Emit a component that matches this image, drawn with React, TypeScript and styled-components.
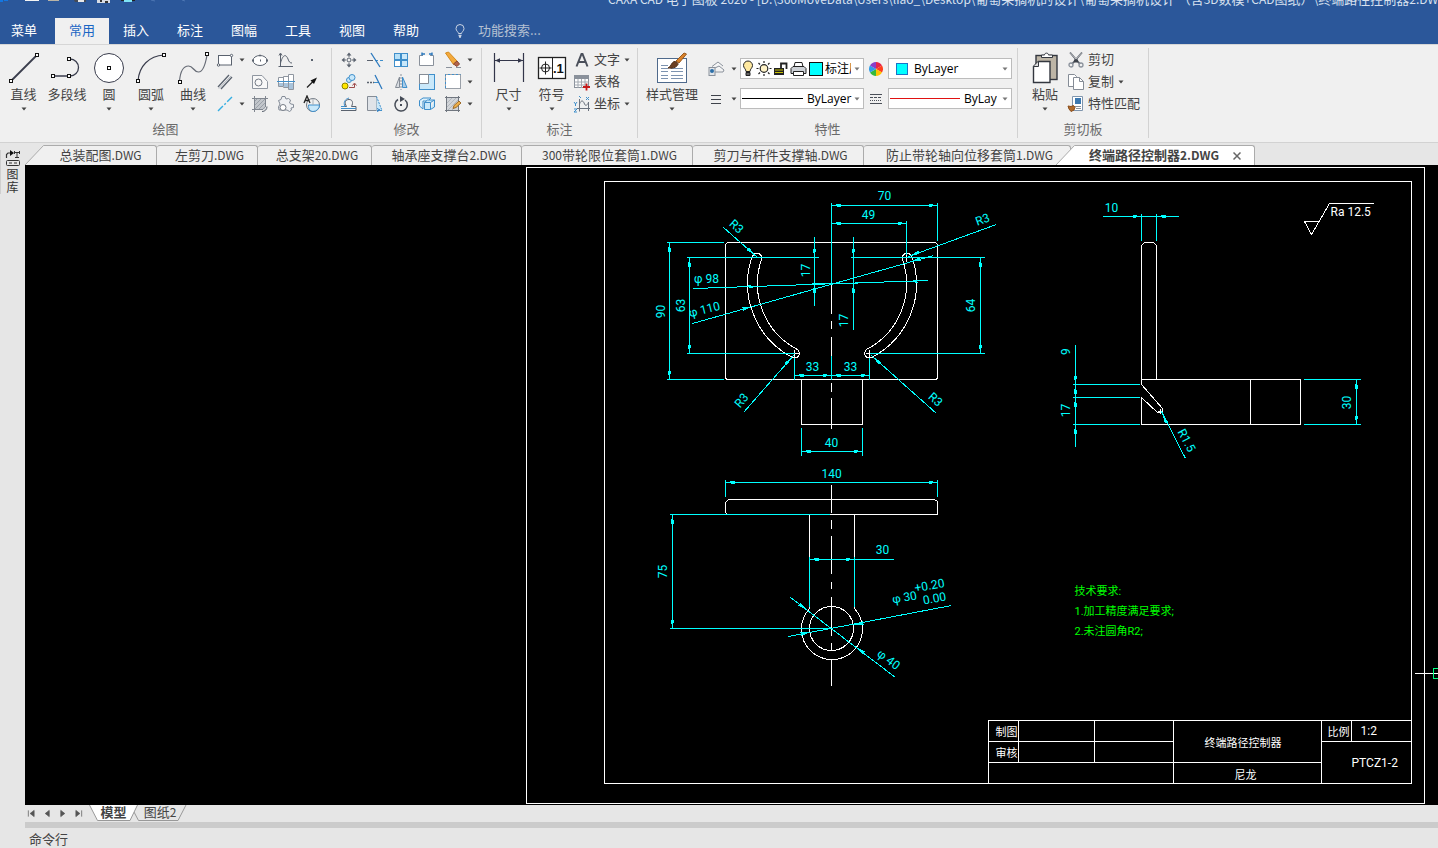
import React from 'react';
import styled, { createGlobalStyle } from 'styled-components';

const UI_FONT = '"Noto Sans CJK SC", "Noto Sans", sans-serif';
const CAD_FONT = 'Roboto, "Noto Sans CJK SC", sans-serif';
const CYAN = '#00ffff';
const WHITE = '#ffffff';
const GREEN = '#00ff00';

const GlobalStyle = createGlobalStyle`
  * { box-sizing: border-box; }
  body { margin: 0; background: #e6e6e6; font-family: ${UI_FONT}; font-size: 13px; color: #444; }
  button, input, select { font: inherit; color: inherit; border: 0; padding: 0; margin: 0; background: none; }
  svg { display: block; flex: none; }
`;

/* ---------- window frame ---------- */

const Window = styled.div`
  display: flex;
  flex-direction: column;
  min-height: 100vh;
  overflow: hidden;
`;

const Header = styled.header`
  background: #2b579a;
  color: #fff;
`;

const TitleBar = styled.div`
  display: flex;
  height: 18px;
  overflow: hidden;
`;

const QuickAccess = styled.div`
  flex: none;
  width: 608px;
`;

const WindowTitle = styled.h1`
  margin: -11px 0 0;
  font-size: 13px;
  font-weight: 400;
  line-height: 20px;
  white-space: nowrap;
  color: #d8e1ef;
`;

const LatinRun = styled.span`
  font-size: 12px;
`;

const MenuBar = styled.nav`
  display: flex;
  align-items: stretch;
  height: 26px;
`;

const MenuTab = styled.button<{ $active?: boolean; $first?: boolean }>`
  width: ${p => (p.$first ? 48 : 54)}px;
  margin-right: ${p => (p.$first ? 7 : 0)}px;
  padding-bottom: 3px;
  line-height: 20px;
  color: ${p => (p.$active ? '#1a66c4' : '#fff')};
  background: ${p => (p.$active ? '#f0f0f0' : 'transparent')};
`;

const Search = styled.label`
  display: flex;
  align-items: center;
  gap: 12px;
  padding-left: 21px;
`;

const SearchInput = styled.input`
  width: 120px;
  padding-bottom: 3px;
  outline: none;
  line-height: 20px;
  &::placeholder { color: #b4c0d2; opacity: 1; }
`;

/* ---------- ribbon ---------- */

const Ribbon = styled.div`
  display: flex;
  height: 99px;
  padding: 3px 0 4px;
  background: #f0f0f0;
  border-top: 1px solid #d6d6d6;
  border-bottom: 1px solid #d2d2d2;
`;

const Group = styled.section<{ $w: number }>`
  flex: none;
  display: flex;
  flex-direction: column;
  width: ${p => p.$w}px;
  border-right: 1px solid #d2d2d2;
`;

const GroupBody = styled.div<{ $pad?: number }>`
  display: flex;
  height: 72px;
  padding-left: ${p => p.$pad ?? 0}px;
`;

const GroupLabel = styled.div`
  text-align: center;
  line-height: 18px;
  color: #6a6a6a;
`;

const BigButton = styled.button<{ $w: number }>`
  flex: none;
  display: flex;
  flex-direction: column;
  align-items: center;
  width: ${p => p.$w}px;
  padding-top: 4px;
  white-space: nowrap;
  line-height: 20px;
  & > span { margin-bottom: 3px; }
`;

const ToolGrid = styled.div<{ $cols: string; $pad?: number }>`
  display: grid;
  grid-template-columns: ${p => p.$cols};
  grid-auto-rows: 22px;
  padding: 1px 0 0 ${p => p.$pad ?? 0}px;
`;

const Tool = styled.button<{ $start?: boolean }>`
  display: flex;
  align-items: center;
  justify-content: ${p => (p.$start ? 'flex-start' : 'center')};
  gap: 4px;
`;

const ToolList = styled.div`
  display: flex;
  flex-direction: column;
  padding-top: 1px;
`;

const ListTool = styled.button`
  display: flex;
  align-items: center;
  height: 22px;
  white-space: nowrap;
  line-height: 18px;
  gap: 3px;
  & > span { padding-bottom: 3px; }
`;

const PropColumn = styled.div`
  display: flex;
  flex-direction: column;
  gap: 9px;
  padding-top: 10px;
`;

const PropRow = styled.div`
  display: flex;
  align-items: center;
  height: 21px;
`;

const PropButton = styled.button<{ $w: number; $menu?: boolean }>`
  display: flex;
  align-items: center;
  justify-content: ${p => (p.$menu ? 'flex-end' : 'center')};
  gap: 5px;
  width: ${p => p.$w}px;
  padding-right: ${p => (p.$menu ? 2 : 0)}px;
`;

const Combo = styled.div<{ $gap: number; $w: number }>`
  display: flex;
  align-items: center;
  gap: ${p => p.$gap}px;
  width: ${p => p.$w}px;
  height: 21px;
  padding: 0 2px 0 1px;
  background: #fff;
  border: 1px solid #bcbcbc;
`;

const ComboSelect = styled.select<{ $wide?: boolean }>`
  flex: 1;
  min-width: 0;
  height: 19px;
  margin-right: ${p => (p.$wide ? -4 : 0)}px;
  appearance: none;
  outline: none;
  overflow: hidden;
  text-overflow: clip;
  color: #000;
  font-family: "Open Sans", ${UI_FONT};
  font-size: 12px;
`;

const LineSample = styled.span<{ $c: string; $w: number }>`
  flex: none;
  width: ${p => p.$w}px;
  height: 1px;
  background: ${p => p.$c};
`;

const Swatch = styled.span<{ $edge: string; $size: number }>`
  flex: none;
  width: ${p => p.$size}px;
  height: ${p => p.$size}px;
  background: ${CYAN};
  border: 1px solid ${p => p.$edge};
`;

/* ---------- work area ---------- */

const Work = styled.div`
  flex: 1;
  display: flex;
`;

const SidePanel = styled.aside`
  flex: none;
  display: flex;
  flex-direction: column;
  width: 25px;
  padding-top: 7px;
`;

const LibraryTab = styled.button`
  display: flex;
  flex-direction: column;
  align-items: center;
  width: 24px;
  height: 44px;
  border-left: 1px solid #cfcfcf;
  font-size: 12px;
  line-height: 13px;
  color: #333;
`;

const Main = styled.main`
  flex: 1;
  min-width: 0;
  display: flex;
  flex-direction: column;
`;

const DocTabs = styled.div`
  display: flex;
  align-items: flex-end;
  height: 22px;
  overflow: hidden;
`;

const DocTab = styled.div<{ $w: number; $active?: boolean }>`
  flex: none;
  display: flex;
  width: ${p => p.$w}px;
  height: 20px;
  margin-left: ${p => (p.$active ? -15 : 0)}px;
  z-index: ${p => (p.$active ? 1 : 0)};
  font-weight: ${p => (p.$active ? 700 : 400)};
`;

const DocFace = styled.div<{ $active?: boolean; $slanted?: boolean }>`
  flex: 1;
  display: flex;
  align-items: center;
  justify-content: center;
  gap: 14px;
  padding-left: ${p => (p.$slanted ? 0 : 5)}px;
  background: ${p => (p.$active ? '#fff' : '#f0f0f0')};
  border-top: 1px solid #ababab;
  border-right: 1px solid #ababab;
  border-radius: ${p => (p.$slanted ? '0 3px 0 0' : '3px 3px 0 0')};
`;

const DocButton = styled.button`
  padding-bottom: 2px;
  line-height: 17px;
  white-space: nowrap;
`;

const CloseButton = styled.button`
  display: flex;
`;

const Canvas = styled.div`
  flex: 1;
  min-height: 640px;
  background: #000;
  overflow: hidden;
`;

const Drawing = styled.svg`
  width: 100%;
  height: 640px;
  font-family: ${CAD_FONT};
`;

const SheetBar = styled.div`
  display: flex;
  height: 17px;
  padding-left: 2px;
`;

const SheetNav = styled.div`
  display: flex;
  align-items: center;
  gap: 8px;
  width: 62px;
  height: 17px;
`;

const NavButton = styled.button`
  display: flex;
`;

const SheetTab = styled.button<{ $active?: boolean; $w: number }>`
  position: relative;
  width: ${p => p.$w}px;
  height: 17px;
  padding-bottom: 4px;
  margin-left: ${p => (p.$active ? 0 : -5)}px;
  z-index: ${p => (p.$active ? 1 : 0)};
  font-weight: ${p => (p.$active ? 700 : 400)};
  line-height: 13px;
  & > svg { position: absolute; top: 0; left: 0; z-index: -1; }
`;

const Splitter = styled.div`
  height: 6px;
  background: #cbcbcb;
`;

const CommandLine = styled.div`
  height: 20px;
  padding-left: 4px;
  line-height: 21px;
`;

/* ---------- small drawings for the ribbon ---------- */

type Kids = { children?: React.ReactNode };
const G = '#5a626e';
const B = '#3f8fcb';
const L = '#c9e8fa';

const Caret = ({ c = '#444' }: { c?: string }) => (
  <svg width="8" height="4" viewBox="0 0 8 4"><path d="M1.500.5h5L4 3.500z" fill={c} /></svg>
);
const S = ({ children }: Kids) => (
  <svg width="18" height="18" viewBox="0 0 18 18" fill="none" stroke={G}>{children}</svg>
);
const Big = ({ children }: Kids) => (
  <svg width="32" height="32" viewBox="0 0 32 32" fill="none" stroke="#3a3d4d">{children}</svg>
);
const Node = ({ x, y }: { x: number; y: number }) => (
  <rect x={x - 1.5} y={y - 1.5} width="3" height="3" fill="#fff" stroke="#111" strokeWidth="1" />
);

const LineIcon = () => <Big><path d="M3 29 29 3" strokeWidth="1.8" /><Node x={3} y={29} /><Node x={29} y={3} /></Big>;
const PolylineIcon = () => (
  <Big><path d="M2 24h17a8.500 8.500 0 0 0 0-17" strokeWidth="1.3" /><Node x={2} y={24} /><Node x={18} y={24} /><Node x={18} y={7} /></Big>
);
const CircleIcon = () => <Big><circle cx="16" cy="16" r="14.5" fill="#fff" /><Node x={16} y={16} /></Big>;
const ArcIcon = () => <Big><path d="M3 29C4 14 14 4 29 3" strokeWidth="1.2" /><Node x={3} y={29} /><Node x={29} y={3} /></Big>;
const CurveIcon = () => (
  <Big><path d="M2.500 29c1-11 4-15 9-15s5 6 10 6 7-8 8.500-17" stroke="#666b75" strokeWidth="1.2" /><Node x={3} y={30} /><Node x={30} y={2} /></Big>
);

const RectIcon = () => <S><rect x="2.500" y="4.500" width="13" height="9.500" fill="#fff" /><circle cx="15.500" cy="4.500" r="1.200" fill="#fff" /><circle cx="2.500" cy="14" r="1.200" fill="#fff" /></S>;
const EllipseIcon = () => <S><ellipse cx="9" cy="9.500" rx="7" ry="5" fill="#fff" /><path d="M1 9.500h2M15 9.500h2M9 9.500h1M8.500 4.500h1" strokeWidth="2" /></S>;
const WaveIcon = () => <S><path d="M3.500 3v12.500M1.500 15.500H16" /><path d="M3.500 12C6 3 9 3 11 8c1 3 2 4 4 4" /><path d="M2 4.500 3.500 2 5 4.500" /></S>;
const DotIcon = () => <S><rect x="8" y="8" width="2" height="2" fill={G} stroke="none" /></S>;
const ParallelIcon = () => <S><path d="M2 14 13 2M5 16 16 4" strokeWidth="1.300" /><path d="M3 15.500 15 3" stroke="#aeb4bc" /></S>;
const HoleIcon = () => <S><path d="M1.500 2.500H11l5.500 6v7h-15z" stroke="#8f96a0" fill="#f8f8f8" /><circle cx="7.500" cy="9.500" r="3.500" stroke="#737a85" /></S>;
const ShaftIcon = () => (
  <S><path d="M1.500 4.500h5v-1h5v-2h5v15h-5v-2h-5v-1h-5z" fill="#fff" stroke="#8f96a0" /><path d="M2 10h14v6h-4v-2H7v-1H2z" fill="#a9c4dc" stroke="none" /><path d="M6.500 4v9M11.500 3v12" stroke="#8f96a0" /><path d="M0 8.500h18" stroke={B} /></S>
);
const ArrowIcon = () => <S><path d="M4 14.500 10 8.500" stroke="#222" strokeWidth="1.200" /><path d="M14 4.500 7.500 7.500l3.500 3.500z" fill="#111" stroke="none" /></S>;
const CenterLineIcon = () => <S><path d="M2 16 16 2" stroke="#35aee2" strokeWidth="1.400" strokeDasharray="7 2 2 2" /></S>;
const HatchIcon = () => (
  <S><rect x="3.500" y="3.500" width="11" height="11" fill="#c2c6cb" stroke="none" /><path d="M3 7l4-4M3 11l8-8M3 15 15 3M7 15l8-8M11 15l4-4" stroke="#9aa0a8" /><path d="M1 3.500h16M1 14.500h11M3.500 1v16M14.500 1v11" stroke="#80868f" /><path d="M11 16.500c3 0 5-2 5-5" /></S>
);
const GearIcon = () => (
  <S><path d="M1.500 5.500 4 4.500 5 1.500h3l1 2.500 2.500-.5L13.500 5 12.500 8l1.500 1 2.500.5v3l-2.500.5.5 2-2 1.500-2.500-1.500H2l-.5-3L3 9z" fill="#eef0f3" stroke="#838b97" /><circle cx="6" cy="12.500" r="3" fill="#fff" stroke="#737a85" /></S>
);
const BlockIcon = () => (
  <S><circle cx="10" cy="10" r="6.500" stroke="#6f7781" /><path d="M5.500 10H16.500A6.500 6.500 0 0 1 10 16.500C7.500 16.500 5 14 5.500 10z" fill={L} stroke={B} /><path d="M1 8 4 1 7 8M2 5.500h4" stroke="#222" strokeWidth="1.300" /><path d="M10 3.500v6.500" stroke="#a9b0b8" /></S>
);

const MoveIcon = () => <S><circle cx="9" cy="9" r="2" /><path d="M9 4v2M9 12v2M4 9h2M12 9h2" /><path d="M9 1.500 6.500 4.500h5zM9 16.500l-2.500-3h5zM1.500 9l3-2.500v5zM16.500 9l-3-2.500v5z" fill={G} stroke="none" /></S>;
const TrimIcon = () => <S><path d="M1 9.500h6" /><path d="M9 9.500h8" stroke={B} strokeDasharray="3 2" /><path d="M5 2l9 14" stroke="#2b78bd" strokeWidth="1.300" /></S>;
const ArrayIcon = () => <S><g stroke={B}><rect x="2.500" y="2.500" width="6" height="6" fill="#b7e0f7" /><rect x="9.500" y="2.500" width="6" height="6" fill={L} /><rect x="2.500" y="9.500" width="6" height="6" fill="#fff" /><rect x="9.500" y="9.500" width="6" height="6" fill={L} /></g></S>;
const StretchIcon = () => <S><path d="M5 4.500H1.500v10h14v-10H12" fill="#fff" stroke="#8a919b" /><path d="M4 1.500v3M4 3h3M14 1.500v3M14 3h-3" stroke="#2b78bd" strokeWidth="1.400" /></S>;
const EraseIcon = () => <S><path d="M1.500 2 4.500 1 13 10l-3.500 3.500z" fill="#f3a93c" stroke="#d58b1c" /><path d="M13 10l2.500 3-2.500 2.500L9.500 13z" fill="#b4644a" stroke="#8a4832" /><path d="M2 16.500h6M12 16.500h5" stroke="#8a919b" /></S>;
const CopyMoveIcon = () => <S><circle cx="5" cy="13" r="3" fill="#ffe600" stroke="#8a8400" /><circle cx="9" cy="7" r="2.500" fill={L} stroke={B} /><circle cx="12" cy="4.500" r="3" fill={L} stroke={B} /><path d="M9 14.500h5.500V11M12.500 12.500l2-2.500 2 2.500" stroke="#9d4b4b" /></S>;
const ExtendIcon = () => <S><path d="M1 9.500h7" strokeWidth="1.300" strokeDasharray="2 1" /><path d="M8 9.500h5" stroke={B} /><path d="M9 2l7 14" stroke="#2b78bd" strokeWidth="1.300" /></S>;
const MirrorIcon = () => <S><path d="M7.500 4v10.500h-4z" fill="#d9dde2" stroke="#858c96" /><path d="M10.500 4v10.500h4.500z" fill="#a9cbe6" stroke={B} /><path d="M9 1v16" stroke="#8a919b" strokeDasharray="2 1" /></S>;
const ScaleIcon = () => <S><rect x="1.500" y="1.500" width="15" height="15" fill={L} stroke={B} /><path d="M1.500 1.500h9v9h-9z" fill="#fff" stroke="#858c96" /></S>;
const BreakIcon = () => <S><rect x="1.500" y="1.500" width="15" height="14" fill="#fff" stroke="#9aa0a8" /><path d="M1.500 15v-13.500h15" stroke={B} strokeDasharray="2 2" /></S>;
const OffsetIcon = () => <S><path d="M1 15.500h15v-4h-4.500c2-4 1-7-2.500-7s-5 3-2.500 7H1" stroke={G} fill="#f4f4f4" /><path d="M1 11.500h4c-2-4 0-7.500 4-8.500M1 13.500h15" stroke={B} /></S>;
const ChamferIcon = () => <S><path d="M1.500 1.500h9v14h-9z" fill="#dfe3e8" stroke="#858c96" /><path d="M10.500 1.500l5.500 14h-5.500" fill={L} stroke={B} strokeDasharray="2 1" /><path d="M11 13.500l3 1.500-3 1.500" stroke="#2b78bd" /></S>;
const RotateIcon = () => <S><path d="M6 4.500a6.200 6.200 0 1 0 7 .5" strokeWidth="1.500" stroke="#454b56" /><path d="M8 1l5 3-5 3z" fill="#454b56" stroke="none" /><rect x="8" y="9" width="2" height="2" fill="#454b56" stroke="none" /></S>;
const CubeIcon = () => <S><g stroke={B}><path d="M1.500 5.500 5 3h8l-3 3H5v8l-3.500-3z" fill="#dff1fb" /><path d="M6.500 7.500h6v7h-6zM6.500 7.500 9.500 5h7l-4 2.500M16.500 5v7l-4 2.500" fill={L} /></g></S>;
const EditHatchIcon = () => <S><rect x="3" y="3" width="11" height="12" fill="#d2d5d9" stroke="none" /><path d="M3 8l5-5M3 12l9-9M4 15 14 5M8 15l6-6" stroke="#b2b7bd" /><path d="M1 2.500h15M1 15.500h15M2.500 1v16M14.500 1v16" stroke="#70767f" /><path d="M9 13.500l1-3 5-4.500 2 2-5 4.500z" fill="#eeb04a" stroke="#9d6a28" /></S>;

const DimensionIcon = () => <Big><path d="M1.500 1v29M30.500 1v29M2 8.500h28" strokeWidth="1.200" stroke="#33364a" /><path d="M2 8.500l5-2.200v4.400zM30 8.500l-5-2.200v4.400z" fill="#33364a" stroke="none" /></Big>;
const SymbolText = styled.text`
  font: 700 13px "Liberation Sans", sans-serif;
`;
const SymbolIcon = () => (
  <Big><rect x="2.500" y="5.500" width="27" height="21" fill="#fff" stroke="#222" strokeWidth="1.300" /><path d="M16.500 5.500v21" stroke="#222" /><circle cx="9.500" cy="16" r="4" stroke="#222" /><path d="M9.500 9.500v13M3.500 16h12" stroke="#222" /><SymbolText x="17" y="21" fill="#111" stroke="none">.1</SymbolText></Big>
);
const TextIcon = () => <S><path d="M3.500 15.500 8.500 3h1L14.500 15.500M5.200 11h7.600" stroke="#4a4f5a" strokeWidth="2" /></S>;
const TableIcon = () => <S><rect x="1.500" y="2.500" width="14" height="12" fill="#fff" stroke="#8a919b" /><path d="M1 2h15v4H1z" fill="#8a919b" stroke="none" /><path d="M1.500 9h14M1.500 12h14M5 6v9M8.500 6v9M12 6v9" stroke="#a3a9b1" /><path d="M13.500 10.500v7M10 14h7" stroke="#c61a1a" strokeWidth="1.800" /></S>;
const CoordIcon = () => <S><path d="M6.500 4v12.500M4 13.500h13M6.500 9c2-5 4-3 5 0s4 0 4-2M15.500 7v9" stroke="#6b727d" /><path d="M1 7l1.500 2L4 7M2.500 9v2M13 2l3 3M16 2l-3 3M1 14h3l-3 3h3M6 1l2 2" stroke={B} /></S>;

const StyleIcon = () => (
  <Big><rect x="1.500" y="6.500" width="29" height="24" fill="#fff" stroke="#4f6a8c" /><path d="M5 13.500h7M5 16.500h7M5 19.500h7M5 23.500h7M5 26.500h7M15 16.500h12M15 19.500h12M15 23.500h12M15 26.500h12" stroke="#7d93b0" /><path d="M20 9 28 1l2.500 1L23 11z" fill="#d9822b" stroke="#9b5a1c" /><path d="M12 16c3-1 3-5 6-6.500 3 0 4 1.500 4 3-2 3.500-6 4-10 3.500z" fill="#6b3f22" stroke="#50301a" /></Big>
);
const LayerIcon = () => <S><path d="M5 6.500 11 2l5 4M6 9l6-3 5 4M8 12h8l1-2" stroke="#8a919b" fill="#f6f6f6" /><rect x="2" y="7.500" width="6" height="8" fill="#e2e6ea" stroke="#8a919b" /><circle cx="5" cy="11" r="2" fill="#2c6fa8" stroke="none" /></S>;
const WeightIcon = () => <S><path d="M4 5.500h10M4 9.500h10M4 13.500h10" stroke="#3f434b" strokeWidth="1.200" /></S>;
const BulbIcon = () => <svg width="12" height="17" viewBox="0 0 12 17"><path d="M6 1a4.500 4.500 0 0 0-4.500 4.500C1.500 8 4 9 4 11.500h4C8 9 10.500 8 10.500 5.500A4.500 4.500 0 0 0 6 1z" fill="#ffe9a0" stroke="#222" /><path d="M4 12.500h4v3H4z" fill="#666" stroke="#222" /></svg>;
const SunIcon = () => <svg width="16" height="17" viewBox="0 0 16 17" stroke="#222" strokeWidth="1.200"><circle cx="8" cy="8.500" r="3.800" fill="#fff3c8" /><path d="M8 1v2M8 14v2M.5 8.500h2M13.500 8.500h2M2.500 3l1.500 1.500M12 12.500l1.500 1.500M13.500 3 12 4.500M4 12.500 2.500 14" /></svg>;
const LockIcon = () => <svg width="14" height="16" viewBox="0 0 14 16"><path d="M7 8V2.500h5.500V8" fill="none" stroke="#222" strokeWidth="1.800" /><path d="M0 7h10v7H0z" fill="#222" /><path d="M1 9h8M1 11.500h8" stroke="#c7c000" /></svg>;
const PrinterIcon = () => <svg width="17" height="16" viewBox="0 0 17 16" stroke="#222" fill="#eceef0"><path d="M4 6 5 1.500h7L13 6" fill="#fff" /><path d="M1 7.500 3 5.500h11l2 2v5H1z" fill="#cdd1d6" /><path d="M3.500 10.500h10v4h-10z" fill="#fff" /></svg>;
const WheelIcon = () => (
  <svg width="14" height="14" viewBox="0 0 14 14">
    <path d="M7 7V0a7 7 0 0 1 6 3.500z" fill="#e8254a" /><path d="M7 7l6-3.500a7 7 0 0 1 0 7z" fill="#ff3f1c" />
    <path d="M7 7l6 3.500A7 7 0 0 1 7 14z" fill="#ffc400" /><path d="M7 7v7a7 7 0 0 1-6-3.500z" fill="#35b93a" />
    <path d="M7 7 1 10.500a7 7 0 0 1 0-7z" fill="#2f9ce8" /><path d="M7 7 1 3.500A7 7 0 0 1 7 0z" fill="#8a3fc8" />
  </svg>
);
const LinetypeIcon = () => <svg width="14" height="12" viewBox="0 0 14 12" stroke="#4a4f58"><path d="M1 1.500h12M1 10.500h12" /><path d="M1 4.500h12" strokeDasharray="3 1" /><path d="M1 7.500h12" strokeDasharray="1 1" /></svg>;

const PasteIcon = () => (
  <Big><rect x="7" y="3.500" width="21" height="24" fill="#bdb5a6" stroke="#33373f" strokeWidth="1.400" /><path d="M12.500 5.500v-2.500h3c0-2.500 4-2.500 4 0h4v2.500z" fill="#fff" stroke="#33373f" /><path d="M4.500 14.500l5-5H21v21H4.500z" fill="#fff" stroke="#33373f" strokeWidth="1.400" /><path d="M4.500 14.500h5v-5" fill="#ddd" stroke="#33373f" /></Big>
);
const CutIcon = () => <S><path d="M3 1.500 13 13M15 1.500 5 13" stroke="#5c626b" strokeWidth="1.800" /><path d="M3 1.500 9 8M15 1.500 9 8" stroke="#f0f0f0" strokeWidth=".6" /><path d="M7 8.500h4v3H7z" fill="#3e434b" stroke="none" /><circle cx="4" cy="14" r="2" stroke="#8a919b" strokeWidth="1.300" /><circle cx="14" cy="14" r="2" stroke="#8a919b" strokeWidth="1.300" /></S>;
const CopyIcon = () => <S><path d="M1.500 1.500h6l2 2v10h-8z" fill="#fff" stroke="#858c96" /><path d="M6.500 4.500h6l4 4v8h-10z" fill="#fff" stroke="#858c96" /><path d="M12.500 4.500v4h4" stroke="#858c96" /></S>;
const MatchIcon = () => <S><path d="M5.500 1.500h10v14h-10z" fill="#fff" stroke="#7f95ad" /><path d="M8 3h6v6H8z" fill="#3c78b0" stroke="none" /><path d="M7 11.500h7M9 13.500h5" stroke="#8a919b" /><path d="M1 11l3 .5 2.500-1 1.500 2-1 2.500-3 1.500L2 14z" fill="#b06a2c" stroke="#8a4d1a" /></S>;
const IdeaIcon = () => <svg width="12" height="14" viewBox="0 0 12 14" fill="none" stroke="#c9d3e3"><path d="M4.500 9.500C4.500 8 2 7 2 4.500a4 4 0 0 1 8 0C10 7 7.500 8 7.500 9.500z" /><path d="M4.500 11.500h3M5 13h2" strokeWidth="1.600" /></svg>;
const QuickIcons = () => (
  <svg width="190" height="4" viewBox="0 0 190 4">
    <path d="M0 0h3v2h-3zM4 0h4v1H4z" fill="#1476e0" /><path d="M25 0h14v1H25z" fill="#f4f4f4" /><path d="M48 0h11v1H48z" fill="#b9b4a6" />
    <path d="M74 0h12v2H75z" fill="#444b57" /><path d="M78 0h6v2h-6z" fill="#e8e8e8" /><path d="M97 0h13v3H97z" fill="#d7dce4" /><path d="M100 0h2v2h-2zM105 1h3v2h-3z" fill="#333" />
    <path d="M121 0h14v1h-14z" fill="#222" /><path d="M124 0h8v2h-8z" fill="#7ee4f5" /><path d="M151 0l4 1M182 0l3 1" stroke="#4d76b3" />
  </svg>
);
const LibraryIcon = () => (
  <svg width="16" height="17" viewBox="0 0 16 17" fill="none" stroke="#333">
    <path d="M9 2.500h6M9.500 1v3M14.500 1v3M12 3v5M10 7.500h4" /><path d="M1.500 8V4.500L3 3h2" strokeWidth="1.200" /><path d="M5 0l4 3-4 3z" fill="#111" stroke="none" />
    <rect x="1.500" y="10.500" width="13" height="5" rx="1" /><path d="M4 13h3M9 13h3" />
  </svg>
);

/* Latin runs are set one size smaller than the Chinese text around them. */
const Mixed = ({ text }: { text: string }) => (
  <>{text.split(/([\x20-\x7e]+)/).map((run, i) => (i % 2 ? <LatinRun key={i}>{run}</LatinRun> : run))}</>
);

/* ---------- CAD drawing helpers (sheet coordinates) ---------- */

type Pt = { x: number; y: number };

const Arrow = ({ x, y, a, c = CYAN }: Pt & { a: number; c?: string }) => (
  <path d="M0 0 9 -1.800V1.800z" fill={c} stroke="none" transform={`translate(${x} ${y}) rotate(${a})`} />
);

const Note = styled.text<{ $c: string; $size: number }>`
  fill: ${p => p.$c};
  stroke: none;
  font-size: ${p => p.$size}px;
  white-space: pre;
`;

const Dim = ({ x, y, r = 0, children }: Pt & { r?: number; children: string }) => (
  <Note $c={CYAN} $size={12} textAnchor="middle" y={4} transform={`translate(${x} ${y}) rotate(${r})`}>{children}</Note>
);

const Label = ({ x, y, c = WHITE, size = 11, children }: Pt & { c?: string; size?: number; children: string }) => (
  <Note $c={c} $size={size} x={x} y={y + 4}>{children}</Note>
);

const SLOT =
  'M752 255A83 83 0 0 0 791 356.500A4.500 4.500 0 1 0 797 349A74 74 0 0 1 761 259A4.500 4.500 0 1 0 752 256';

const FrontView = () => (
  <g>
    <g stroke={WHITE}>
      <rect x="725" y="242" width="212" height="137" rx="3" />
      <path d="M801 379V424H862V379M831 283V313M831 320V328M831 336V355M831 382V391M831 397V428" />
      <path d={SLOT} />
      <path d={SLOT} transform="matrix(-1 0 0 1 1663 0)" />
      <path d="M906 253v8M902 257h8M753 257h8M790 353h8M794 349v8M865 353h8M869 349v8" />
    </g>
    <g stroke={CYAN}>
      <path d="M831 202V283M831 355V379M831 205H937M937 202V240M831 223H906M906 220V254" />
      <path d="M814 236V305M853 236V329M686 257H818M850 257H984M811 283H857" />
      <path d="M980 257V353M869 353H984M689 257V353M686 353H794M669 242V379M666 242H723M666 379H723" />
      <path d="M794 357V379M869 357V379M794 375H869M801 427V455M862 427V455M801 451H862" />
      <path d="M693 288 928 280M692 323 933 255M723 227 757 257M996 224 908 256M743 412 793 355M936 413 871 355" />
    </g>
    <Arrow x={831} y={205} a={0} /><Arrow x={937} y={205} a={180} /><Arrow x={831} y={223} a={0} /><Arrow x={906} y={223} a={180} />
    <Arrow x={814} y={257} a={-90} /><Arrow x={814} y={283} a={90} /><Arrow x={853} y={257} a={-90} /><Arrow x={853} y={283} a={90} />
    <Arrow x={980} y={257} a={90} /><Arrow x={980} y={353} a={-90} /><Arrow x={689} y={257} a={90} /><Arrow x={689} y={353} a={-90} />
    <Arrow x={669} y={242} a={90} /><Arrow x={669} y={379} a={-90} />
    <Arrow x={794} y={375} a={0} /><Arrow x={831} y={375} a={180} /><Arrow x={831} y={375} a={0} /><Arrow x={869} y={375} a={180} />
    <Arrow x={801} y={451} a={0} /><Arrow x={862} y={451} a={180} />
    <Arrow x={757} y={286} a={178} /><Arrow x={908} y={281} a={-2} />
    <Arrow x={751} y={306} a={164} /><Arrow x={911} y={261} a={-16} />
    <Arrow x={754} y={254} a={221} /><Arrow x={910} y={255} a={-20} /><Arrow x={791} y={357} a={131} /><Arrow x={873} y={357} a={42} />
    <Dim x={884} y={195}>70</Dim><Dim x={868} y={214}>49</Dim>
    <Dim x={805} y={270} r={-90}>17</Dim><Dim x={843} y={320} r={-90}>17</Dim>
    <Dim x={970} y={305} r={-90}>64</Dim><Dim x={680} y={305} r={-90}>63</Dim><Dim x={660} y={311} r={-90}>90</Dim>
    <Dim x={812} y={366}>33</Dim><Dim x={850} y={366}>33</Dim><Dim x={831} y={442}>40</Dim>
    <Dim x={706} y={278}>φ 98</Dim><Dim x={704} y={309} r={-14}>φ 110</Dim>
    <Dim x={736} y={226} r={42}>R3</Dim><Dim x={982} y={219} r={-20}>R3</Dim>
    <Dim x={741} y={400} r={-49}>R3</Dim><Dim x={935} y={399} r={42}>R3</Dim>
  </g>
);

const SideView = () => (
  <g>
    <g stroke={WHITE}>
      <path d="M1141 384V245L1144 242H1153L1156 245V379M1141 379H1300V424H1141V397M1250 379V424" />
      <path d="M1141 384 1162 408V411L1157 412 1141 397M1157 411h5M1160 408v5" />
    </g>
    <g stroke={CYAN}>
      <path d="M1102 216H1178M1141 213V240M1156 213V240M1075 344V446M1072 384H1139M1072 397H1139M1072 424H1139" />
      <path d="M1161 411 1185 458M1356 379V424M1303 379H1360M1303 424H1360" />
    </g>
    <Arrow x={1141} y={216} a={180} /><Arrow x={1156} y={216} a={0} />
    <Arrow x={1075} y={384} a={-90} /><Arrow x={1075} y={384} a={90} /><Arrow x={1075} y={397} a={90} /><Arrow x={1075} y={424} a={90} />
    <Arrow x={1162} y={414} a={63} /><Arrow x={1356} y={379} a={90} /><Arrow x={1356} y={424} a={-90} />
    <Dim x={1111} y={207}>10</Dim><Dim x={1065} y={351} r={-90}>9</Dim><Dim x={1065} y={410} r={-90}>17</Dim>
    <Dim x={1346} y={402} r={-90}>30</Dim><Dim x={1186} y={440} r={62}>R1.5</Dim>
    <path stroke={WHITE} d="M1373 203H1329L1311 234 1304 221H1319" />
    <Label x={1330} y={211} size={12}>Ra 12.5</Label>
  </g>
);

const TopView = () => (
  <g>
    <g stroke={WHITE}>
      <path d="M829 514H937V501L934 499H728L725 502V512L727 514" />
      <path d="M809 514V556M854 514V556M809 606V608A30.500 30.500 0 1 0 854 608V606" />
      <circle cx="831" cy="628" r="22" />
      <path d="M831 484V512M831 519V528M831 535V573M831 581V588M831 596V635M831 642V650M831 659V685" />
    </g>
    <g stroke={CYAN}>
      <path d="M725 482H937M725 479V496M937 479V496M669 514H829M809 556V606M854 556V606M809 559H893" />
      <path d="M672 514V628M669 628H831M790 597 895 677M788 636 951 605" />
    </g>
    <Arrow x={725} y={482} a={0} /><Arrow x={937} y={482} a={180} /><Arrow x={809} y={559} a={0} /><Arrow x={854} y={559} a={180} />
    <Arrow x={672} y={514} a={90} /><Arrow x={672} y={628} a={-90} />
    <Arrow x={806} y={609} a={217} /><Arrow x={856} y={647} a={37} /><Arrow x={809} y={632} a={169} /><Arrow x={854} y={624} a={-11} />
    <Dim x={831} y={473}>140</Dim><Dim x={882} y={549}>30</Dim><Dim x={662} y={571} r={-90}>75</Dim>
    <Dim x={904} y={597} r={-10}>φ 30</Dim><Dim x={929} y={585} r={-10}>+0.20</Dim><Dim x={934} y={598} r={-10}>0.00</Dim>
    <Dim x={888} y={659} r={37}>φ 40</Dim>
  </g>
);

const TitleBlock = () => (
  <g>
    <path stroke={WHITE} d="M988 783V720H1411M988 741H1173M1321 741H1411M988 762H1321M1018 720V762M1094 720V762M1173 720V783M1321 720V783M1351 720V741" />
    <Label x={995} y={731}>制图</Label><Label x={995} y={752}>审核</Label>
    <Label x={1204} y={742}>终端路径控制器</Label><Label x={1234} y={774}>尼龙</Label>
    <Label x={1327} y={731}>比例</Label><Label x={1360} y={730} size={12}>1:2</Label><Label x={1351} y={762} size={12}>PTCZ1-2</Label>
  </g>
);

/* ---------- page data ---------- */

const menus = ['菜单', '常用', '插入', '标注', '图幅', '工具', '视图', '帮助'];

const docs = [
  { name: '总装配图.DWG', w: 132 }, { name: '左剪刀.DWG', w: 101 }, { name: '总支架20.DWG', w: 114 },
  { name: '轴承座支撑台2.DWG', w: 150 }, { name: '300带轮限位套筒1.DWG', w: 171 }, { name: '剪刀与杆件支撑轴.DWG', w: 171 },
  { name: '防止带轮轴向位移套筒1.DWG', w: 207 }, { name: '终端路径控制器2.DWG', w: 199 },
];

const drawTools: [string, React.FC, boolean?][] = [
  ['矩形', RectIcon, true], ['椭圆', EllipseIcon], ['公式曲线', WaveIcon], ['点', DotIcon],
  ['平行线', ParallelIcon], ['孔轴', HoleIcon], ['轴', ShaftIcon], ['箭头', ArrowIcon],
  ['中心线', CenterLineIcon, true], ['剖面线', HatchIcon], ['齿轮', GearIcon], ['块', BlockIcon],
];

const editTools: [string, React.FC, boolean?][] = [
  ['平移', MoveIcon], ['裁剪', TrimIcon], ['阵列', ArrayIcon], ['拉伸', StretchIcon], ['删除', EraseIcon, true],
  ['平移复制', CopyMoveIcon], ['延伸', ExtendIcon], ['镜像', MirrorIcon], ['缩放', ScaleIcon], ['打断', BreakIcon, true],
  ['等距', OffsetIcon], ['过渡', ChamferIcon], ['旋转', RotateIcon], ['分解', CubeIcon], ['编辑', EditHatchIcon, true],
];

const BigTool = ({ label, w, icon, caret = true }: { label: string; w: number; icon: React.ReactNode; caret?: boolean }) => (
  <BigButton $w={w}>{icon}<span>{label}</span>{caret && <Caret />}</BigButton>
);

const Slant = ({ active }: { active?: boolean }) => (
  <svg width="20" height="20" viewBox="0 0 20 20">
    <path d="M0 20 18.500.5H20V20z" fill={active ? '#fff' : '#f0f0f0'} /><path d="M0 20 18.500.5H20" fill="none" stroke="#ababab" />
  </svg>
);

export default function App() {
  return (
    <Window>
      <GlobalStyle />
      <Header>
        <TitleBar>
          <QuickAccess><QuickIcons /></QuickAccess>
          <WindowTitle>
            <Mixed text={'CAXA CAD 电子图板 2020 - [D:\\360MoveData\\Users\\liao_\\Desktop\\葡萄采摘机的设计\\葡萄采摘机设计 （含3D数模+CAD图纸）\\终端路径控制器2.DWG]'} />
          </WindowTitle>
        </TitleBar>
        <MenuBar>
          {menus.map((m, i) => <MenuTab key={m} $first={i === 0} $active={i === 1}>{m}</MenuTab>)}
          <Search><IdeaIcon /><SearchInput aria-label="功能搜索" placeholder="功能搜索..." /></Search>
        </MenuBar>
      </Header>

      <Ribbon>
        <Group $w={332}>
          <GroupBody $pad={1}>
            <BigTool label="直线" w={45} icon={<LineIcon />} />
            <BigTool label="多段线" w={42} icon={<PolylineIcon />} caret={false} />
            <BigTool label="圆" w={42} icon={<CircleIcon />} />
            <BigTool label="圆弧" w={42} icon={<ArcIcon />} />
            <BigTool label="曲线" w={42} icon={<CurveIcon />} />
            <ToolGrid $cols="31px 26px 26px 26px" $pad={2}>
              {drawTools.map(([name, Icon, caret], i) => (
                <Tool key={name} title={name} $start={i % 4 === 0}><Icon />{caret && <Caret />}</Tool>
              ))}
            </ToolGrid>
          </GroupBody>
          <GroupLabel>绘图</GroupLabel>
        </Group>

        <Group $w={150}>
          <GroupBody $pad={8}>
            <ToolGrid $cols="26px 26px 26px 26px 34px">
              {editTools.map(([name, Icon, caret]) => (
                <Tool key={name} title={name} $start><Icon />{caret && <Caret />}</Tool>
              ))}
            </ToolGrid>
          </GroupBody>
          <GroupLabel>修改</GroupLabel>
        </Group>

        <Group $w={156}>
          <GroupBody $pad={5}>
            <BigTool label="尺寸" w={43} icon={<DimensionIcon />} />
            <BigTool label="符号" w={43} icon={<SymbolIcon />} />
            <ToolList>
              <ListTool><TextIcon /><span>文字</span><Caret /></ListTool>
              <ListTool><TableIcon /><span>表格</span></ListTool>
              <ListTool><CoordIcon /><span>坐标</span><Caret /></ListTool>
            </ToolList>
          </GroupBody>
          <GroupLabel>标注</GroupLabel>
        </Group>

        <Group $w={380}>
          <GroupBody $pad={6}>
            <BigTool label="样式管理" w={56} icon={<StyleIcon />} />
            <PropColumn>
              <PropRow>
                <PropButton $w={40} $menu title="图层"><LayerIcon /><Caret /></PropButton>
                <Combo $gap={2} $w={124}>
                  <BulbIcon /><SunIcon /><LockIcon /><PrinterIcon /><Swatch $edge="#111" $size={14} />
                  <ComboSelect aria-label="图层"><option>标注层</option></ComboSelect><Caret c="#777" />
                </Combo>
                <PropButton $w={24} title="颜色"><WheelIcon /></PropButton>
                <Combo $gap={6} $w={124}>
                  <LineSample $c="transparent" $w={0} /><Swatch $edge="#1a74c8" $size={12} />
                  <ComboSelect aria-label="颜色"><option>ByLayer</option></ComboSelect><Caret c="#777" />
                </Combo>
              </PropRow>
              <PropRow>
                <PropButton $w={40} $menu title="线宽"><WeightIcon /><Caret /></PropButton>
                <Combo $gap={4} $w={124}>
                  <LineSample $c="#000" $w={61} />
                  <ComboSelect $wide aria-label="线宽"><option>ByLayer</option></ComboSelect><Caret c="#777" />
                </Combo>
                <PropButton $w={24} title="线型"><LinetypeIcon /></PropButton>
                <Combo $gap={4} $w={124}>
                  <LineSample $c="#e01212" $w={70} />
                  <ComboSelect aria-label="线型"><option>ByLayer</option></ComboSelect><Caret c="#777" />
                </Combo>
              </PropRow>
            </PropColumn>
          </GroupBody>
          <GroupLabel>特性</GroupLabel>
        </Group>

        <Group $w={131}>
          <GroupBody $pad={5}>
            <BigTool label="粘贴" w={44} icon={<PasteIcon />} />
            <ToolList>
              <ListTool><CutIcon /><span>剪切</span></ListTool>
              <ListTool><CopyIcon /><span>复制</span><Caret /></ListTool>
              <ListTool><MatchIcon /><span>特性匹配</span></ListTool>
            </ToolList>
          </GroupBody>
          <GroupLabel>剪切板</GroupLabel>
        </Group>
      </Ribbon>

      <Work>
        <SidePanel><LibraryTab><LibraryIcon /><span>图</span><span>库</span></LibraryTab></SidePanel>
        <Main>
          <DocTabs>
            {docs.map((d, i) => {
              const active = i === docs.length - 1;
              const slanted = active || i === 0;
              return (
                <DocTab key={d.name} $w={d.w} $active={active}>
                  {slanted && <Slant active={active} />}
                  <DocFace $active={active} $slanted={slanted}>
                    <DocButton><Mixed text={d.name} /></DocButton>
                    {active && (
                      <CloseButton aria-label="关闭">
                        <svg width="8" height="8" viewBox="0 0 8 8"><path d="M.5.5l7 7M7.500.5l-7 7" stroke="#666" strokeWidth="1.500" /></svg>
                      </CloseButton>
                    )}
                  </DocFace>
                </DocTab>
              );
            })}
          </DocTabs>

          <Canvas>
            <Drawing fill="none" shapeRendering="crispEdges">
              <g transform="translate(-24.500 -164.500)">
                <g stroke={WHITE}>
                  <rect x="526" y="167" width="898" height="636" />
                  <rect x="604" y="181" width="807" height="602" />
                </g>
                <FrontView />
                <SideView />
                <TopView />
                <TitleBlock />
                <Label x={1074} y={590} c={GREEN}>技术要求:</Label>
                <Label x={1074} y={610} c={GREEN}>1.加工精度满足要求;</Label>
                <Label x={1074} y={630} c={GREEN}>2.未注圆角R2;</Label>
                <path stroke={WHITE} d="M1414 673H1438" />
                <rect x="1433" y="668" width="10" height="10" stroke="#00ff80" />
              </g>
            </Drawing>
          </Canvas>

          <SheetBar>
            <SheetNav>
              {['M1.500 1v7M8 1v7L3.500 4.500z', 'M7 1v7L2.500 4.500z', 'M2 1v7L6.500 4.500z', 'M7.500 1v7M1 1v7L5.500 4.500z'].map((d, i) => (
                <NavButton key={d} aria-label={['首页', '上一页', '下一页', '末页'][i]}>
                  <svg width="8" height="9" viewBox="0 0 9 9"><path d={d} fill="#555" stroke="#555" strokeWidth=".8" /></svg>
                </NavButton>
              ))}
            </SheetNav>
            <SheetTab $active $w={49}>
              <svg width="49" height="17" viewBox="0 0 49 17"><path d="M.5 0 8.500 15.500H41L48.500 0" fill="#fff" stroke="#999" /></svg>
              模型
            </SheetTab>
            <SheetTab $w={54}>
              <svg width="54" height="17" viewBox="0 0 54 17"><path d="M1 7 5.500 15.500H45L53 0" fill="none" stroke="#999" /></svg>
              <Mixed text="图纸2" />
            </SheetTab>
          </SheetBar>
          <Splitter />
          <CommandLine>命令行</CommandLine>
        </Main>
      </Work>
    </Window>
  );
}
